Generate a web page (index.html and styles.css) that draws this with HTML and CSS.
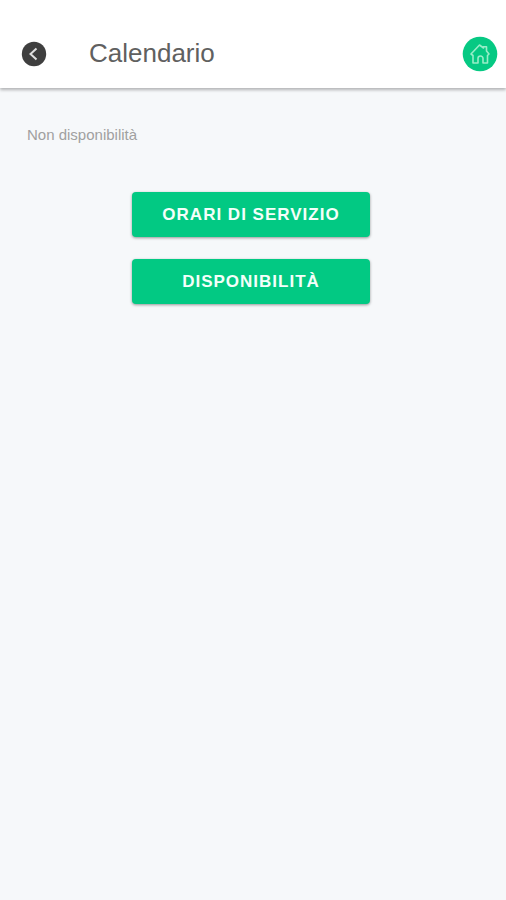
FILE: index.html
```html
<!DOCTYPE html>
<html lang="it">
<head>
<meta charset="utf-8">
<meta name="viewport" content="width=device-width, initial-scale=1">
<title>Calendario</title>
<link rel="stylesheet" href="styles.css">
</head>
<body>
<header class="topbar">
  <button class="icon-button back" type="button" aria-label="Indietro">
    <svg viewBox="0 0 26 26" width="26" height="26" aria-hidden="true">
      <circle cx="13" cy="13" r="12.2" fill="#3f3f3f"/>
      <path d="M15.500 7.500 9.500 13l6 5.500" fill="none" stroke="#e0e0e0" stroke-width="2"/>
    </svg>
  </button>
  <h1 class="title">Calendario</h1>
  <button class="icon-button home" type="button" aria-label="Home">
    <svg viewBox="0 0 36 36" width="36" height="36" aria-hidden="true">
      <circle cx="18" cy="18" r="17.300" fill="#06c983"/>
      <path d="M9 18 17.500 9l4 3V10.800h3V15l2.500 3-1.500 1.500V27H21v-4.500a2.500 2.500 0 0 0-5 0V27h-5v-7.500z" fill="none" stroke="#98edc8" stroke-width="1.600" stroke-linejoin="round"/>
    </svg>
  </button>
</header>
<main class="content">
  <p class="status">Non disponibilità</p>
  <div class="actions">
    <button class="action" type="button">ORARI DI SERVIZIO</button>
    <button class="action" type="button">DISPONIBILITÀ</button>
  </div>
</main>
</body>
</html>
```
FILE: styles.css
```css
* {
  box-sizing: border-box;
}

body {
  margin: 0;
  min-height: 100vh;
  background: #f6f8fa;
  font-family: "Liberation Sans", Arial, sans-serif;
}

.topbar {
  display: flex;
  align-items: center;
  padding: 36px 8px 16px 21px;
  background: #fff;
  box-shadow: 0 2px 3px rgba(0, 0, 0, 0.28);
}

.icon-button {
  display: flex;
  padding: 0;
  border: 0;
  background: none;
}

.title {
  flex: 1;
  margin: 0 0 2px 42px;
  color: #606060;
  font-size: 26px;
  font-weight: 400;
  line-height: 32px;
}

.content {
  padding: 37px 31px 36px 27px;
}

.status {
  margin: 0;
  color: #a0a0a0;
  font-size: 15px;
  line-height: 20px;
}

.actions {
  display: flex;
  flex-direction: column;
  align-items: center;
  gap: 22px;
  margin-top: 47px;
}

.action {
  width: 238px;
  max-width: 100%;
  padding: 12px;
  border: 0;
  border-radius: 4px;
  background: #02c983;
  color: #f4fffa;
  box-shadow: 0 1px 3px rgba(0, 0, 0, 0.4);
  font: bold 17px/21px "Liberation Sans", Arial, sans-serif;
  letter-spacing: 1px;
}
```
